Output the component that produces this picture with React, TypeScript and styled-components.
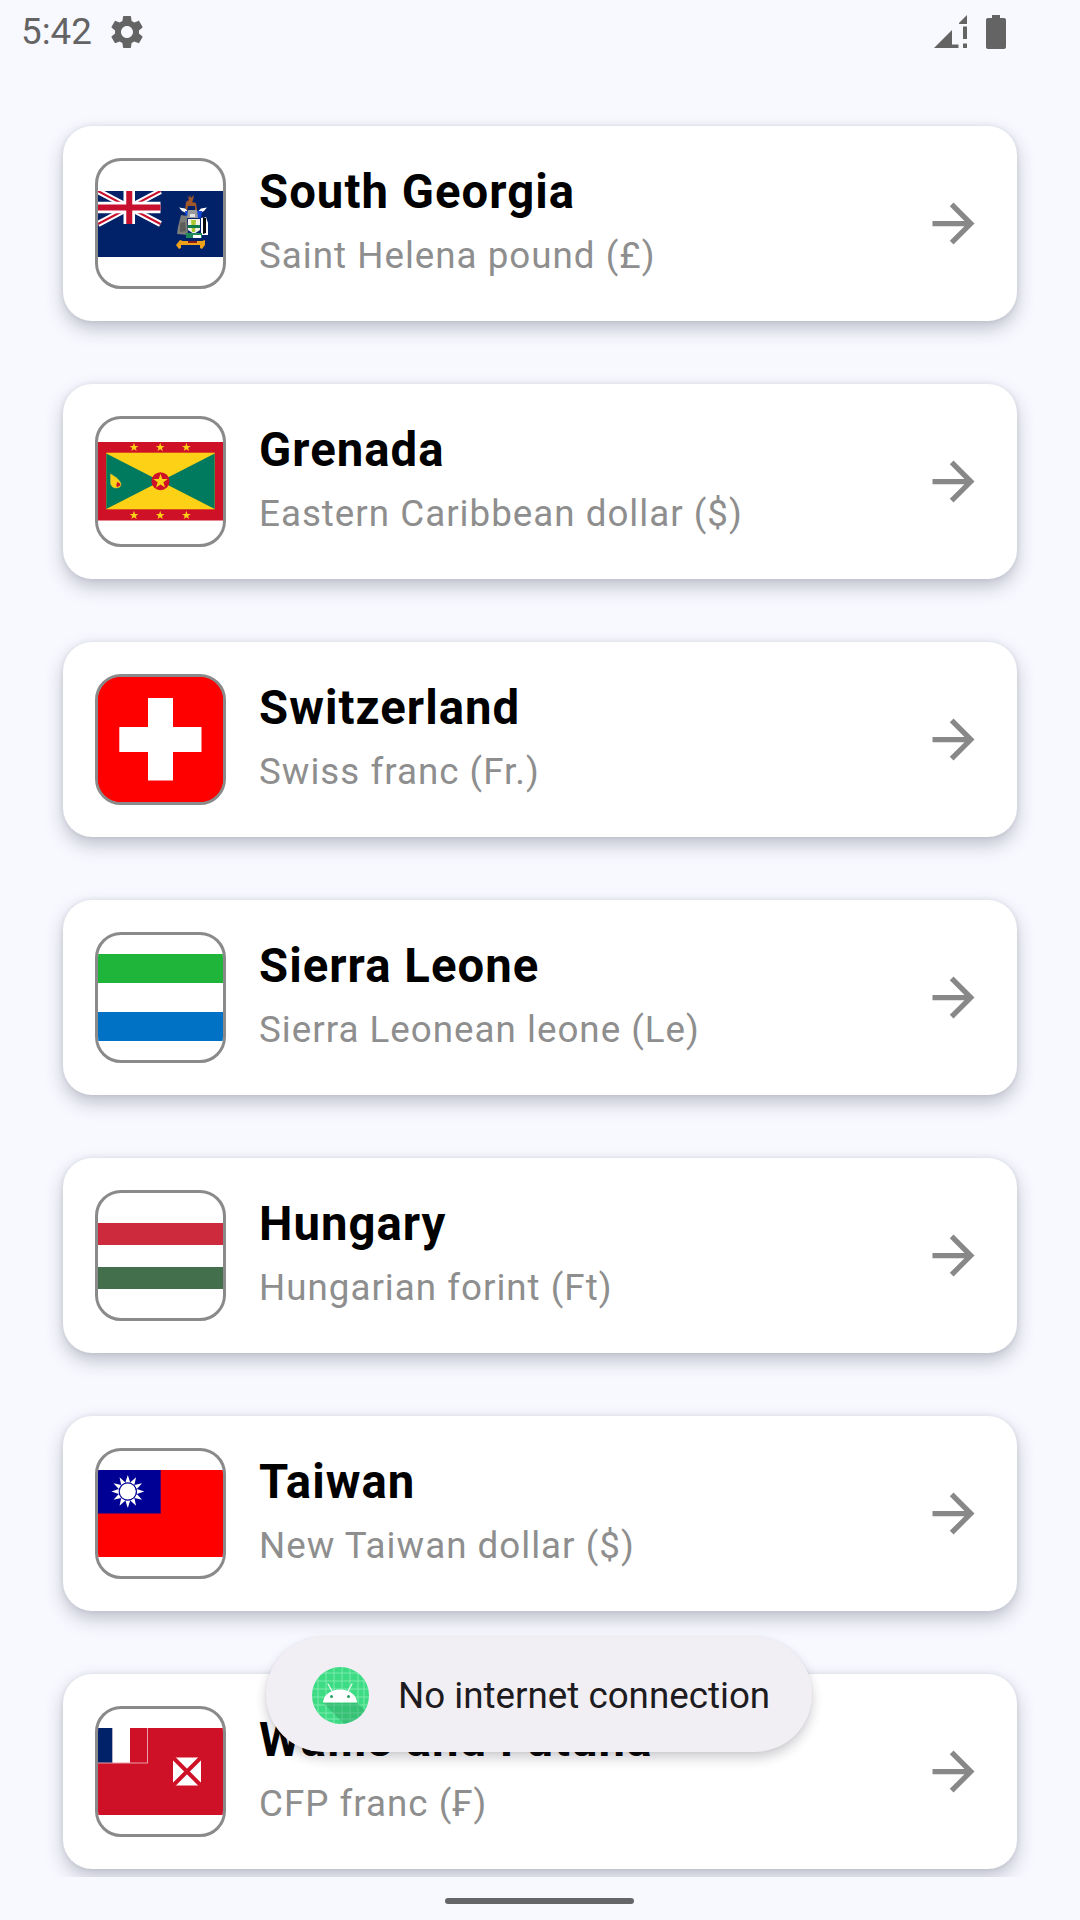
import React from "react";
import styled, { createGlobalStyle } from "styled-components";

const Global = createGlobalStyle`
  html, body { margin: 0; padding: 0; background: #f8f9ff; }
  * { box-sizing: border-box; }
`;

const Screen = styled.div`
  position: relative;
  width: 1080px;
  height: 1920px;
  overflow: hidden;
  background: #f8f9ff;
  font-family: Roboto, "Noto Sans", sans-serif;
`;

const StatusBar = styled.div`
  height: 63px;
  padding: 0 74px 0 21px;
  display: flex;
  align-items: center;
  color: #646464;
`;

const Clock = styled.span`
  font-size: 36.75px;
  line-height: 63px;
  width: 86px;
`;

const StatusGroup = styled.div`
  margin-left: auto;
  display: flex;
  align-items: center;
  gap: 18px;
`;

const Icon = styled.svg`
  display: block;
  flex: none;
  fill: currentColor;
`;

const List = styled.div`
  height: 1814px;
  padding: 63px 63px 0;
  display: flex;
  flex-direction: column;
  gap: 63px;
  overflow: hidden;
`;

const Card = styled.div`
  flex: none;
  height: 195px;
  padding: 0 32px;
  display: flex;
  align-items: center;
  background: #fff;
  border-radius: 29px;
  box-shadow: 0 8px 18px rgba(30, 35, 60, 0.26), 0 0 5px rgba(30, 35, 60, 0.1);
`;

const FlagBox = styled.div<{ $fill?: string }>`
  flex: none;
  width: 131px;
  height: 131px;
  border: 3px solid #8a8a8a;
  border-radius: 26px;
  background: ${(p) => p.$fill ?? "#fff"};
  display: flex;
  align-items: center;
  overflow: hidden;
`;

const FlagArt = styled.svg`
  display: block;
  width: 125px;
  flex: none;
`;

const Texts = styled.div`
  flex: 1;
  margin-left: 33px;
  padding-bottom: 5px;
  display: flex;
  flex-direction: column;
  gap: 14px;
`;

const Title = styled.div`
  font-size: 47.25px;
  font-weight: 700;
  line-height: 55px;
  letter-spacing: 1.05px;
  color: #000;
`;

const Subtitle = styled.div`
  font-size: 36.75px;
  line-height: 43px;
  letter-spacing: 1px;
  color: #8e8e8e;
`;

const Arrow = styled(Icon)`
  color: #888;
`;

const Toast = styled.div`
  position: absolute;
  left: 266px;
  top: 1637px;
  width: 546px;
  height: 115px;
  padding: 1px 0 0 46px;
  display: flex;
  align-items: center;
  gap: 29px;
  background: #f1eff4;
  border-radius: 58px;
  box-shadow: 0 6px 12px rgba(30, 30, 50, 0.22), 0 0 3px rgba(30, 30, 50, 0.06);
  font-size: 36.75px;
  color: #1d1b20;
  white-space: nowrap;
`;

const HomeBar = styled.div`
  position: absolute;
  left: 445px;
  top: 1898px;
  width: 189px;
  height: 6px;
  border-radius: 3px;
  background: #646668;
`;

const star = (cx: number, cy: number, r: number) => {
  const pts: string[] = [];
  for (let i = 0; i < 10; i++) {
    const rad = i % 2 ? r * 0.4 : r;
    const a = -Math.PI / 2 + (i * Math.PI) / 5;
    pts.push(`${(cx + rad * Math.cos(a)).toFixed(2)},${(cy + rad * Math.sin(a)).toFixed(2)}`);
  }
  return pts.join(" ");
};

const SouthGeorgia = () => (
  <FlagArt viewBox="0 0 125 66">
    <rect width="125" height="66" fill="#012169" />
    <path d="M0 0L62.5 33M62.5 0L0 33" stroke="#fff" strokeWidth="6" />
    <path d="M0 0L62.5 33M62.5 0L0 33" stroke="#c8102e" strokeWidth="2" />
    <path d="M31.25 0V33M0 16.5H62.5" stroke="#fff" strokeWidth="11.5" />
    <path d="M31.25 0V33M0 16.5H62.5" stroke="#c8102e" strokeWidth="6" />
    <path d="M89 4l2 3 1-3 1 3 3-3-1 5-1 2 4 1 1 7-2 1 0-5-7 0-1 5-2 0 1-9 3-2z" fill="#a0582a" />
    <path d="M81 16.500l6 1 3 3-2 1.500-4-2zM109 16.500l-6 1-3 3 2 1.500 4-2z" fill="#fff" />
    <path d="M87 20h17l-1 7h-15z" fill="#1446d8" />
    <path d="M90 19h9l1 8h-11z" fill="#9a9a9a" />
    <path d="M92 23h5v3h-5z" fill="#e4e4e4" />
    <path d="M80 36l3-12 6 1 1 19-11-1z" fill="#7c7c78" />
    <path d="M82 32l5-1 1 9-6 1z" fill="#5c5c58" />
    <path d="M90 28h12v11l-6 4-6-4z" fill="#f1f1ea" />
    <path d="M93 29h5l-1 12h-3z" fill="#a9c832" />
    <path d="M90 34h12v3h-12z" fill="#0f7a4a" />
    <path d="M103 27l5-1 2 6 0 12-7 0z" fill="#fff" />
    <path d="M105 26l3 1 0 15-3 1z" fill="#0b0b0b" />
    <path d="M88 42h16v5h-16z" fill="#1f8a58" />
    <path d="M95 44h8v3h-8z" fill="#fff" />
    <path d="M82 49l3 1h19l3-1 0 5-3 4-2-1 0-3h-19l0 3-2 1-3-4z" fill="#eda21a" />
    <path d="M90 50h9v2h-9z" fill="#8c1d18" />
  </FlagArt>
);

const Grenada = () => (
  <FlagArt viewBox="0 0 125 78.5">
    <rect width="125" height="78.5" fill="#ce1126" />
    <rect x="8.3" y="10.7" width="108.4" height="56.6" fill="#fcd116" />
    <path d="M8.3 11.4L62.5 39.2L8.3 67zM116.7 11.4L62.5 39.2L116.7 67z" fill="#007a5e" />
    <circle cx="62.5" cy="39.2" r="9" fill="#ce1126" />
    <polygon points={star(62.5, 39.4, 7.6)} fill="#fcd116" />
    {[36, 62.2, 88.4].map((x) => (
      <React.Fragment key={x}>
        <polygon points={star(x, 5.4, 4.6)} fill="#fcd116" />
        <polygon points={star(x, 73.4, 4.6)} fill="#fcd116" />
      </React.Fragment>
    ))}
    <path d="M12.500 32c5 2.500 10 6.500 10.500 10.500 0 2.500-2.500 3.500-5 3.500-3.500 0-5.500-2.500-5.500-6z" fill="#fcd116" stroke="#d8c040" strokeWidth="0.5" />
    <path d="M19.500 40c2 .8 3 2 3 3.300l-3.500 2c-1-1.800-.8-3.600.5-5.300z" fill="#ce1126" />
  </FlagArt>
);

const Swiss = () => (
  <FlagArt viewBox="0 0 125 125">
    <rect width="125" height="125" fill="#f00" />
    <path d="M50 21h25v29h28.500v25h-28.500v28.500h-25v-28.500h-28.700v-25h28.700z" fill="#fff" />
  </FlagArt>
);

const SierraLeone = () => (
  <FlagArt viewBox="0 0 125 87">
    <rect width="125" height="29" fill="#1eb53a" />
    <rect y="29" width="125" height="29" fill="#fff" />
    <rect y="58" width="125" height="29" fill="#0072c6" />
  </FlagArt>
);

const Hungary = () => (
  <FlagArt viewBox="0 0 125 66">
    <rect width="125" height="22" fill="#cd2a3e" />
    <rect y="22" width="125" height="22" fill="#fff" />
    <rect y="44" width="125" height="22" fill="#436f4d" />
  </FlagArt>
);

const Taiwan = () => {
  const rays = Array.from({ length: 12 }, (_, i) => i * 30);
  return (
    <FlagArt viewBox="0 0 125 87">
      <rect width="125" height="87" fill="#fe0000" />
      <rect width="62.700" height="43.500" fill="#000095" />
      <g transform="translate(29.800 21.500)">
        {rays.map((a) => (
          <polygon key={a} points="-2.400,-9 2.400,-9 0,-16.500" fill="#fff" transform={`rotate(${a})`} />
        ))}
        <circle r="9" fill="#000095" />
        <circle r="8" fill="#fff" />
      </g>
    </FlagArt>
  );
};

const Wallis = () => (
  <FlagArt viewBox="0 0 125 87">
    <rect width="125" height="87" fill="#ce1126" />
    <rect width="50" height="35.500" fill="#e8a0a8" />
    <rect width="14.500" height="34.500" fill="#012169" />
    <rect x="14.500" width="17.500" height="34.500" fill="#fff" />
    <rect x="32" width="17" height="34.500" fill="#ce1126" />
    <rect x="75" y="29.500" width="28" height="28" fill="#fff" />
    <path d="M75 29.500L103 57.500M103 29.500L75 57.500" stroke="#ce1126" strokeWidth="4" />
  </FlagArt>
);

const AndroidBadge = () => {
  const lines = [6, 14, 22, 30, 38, 46, 52];
  return (
    <Icon width="57" height="57" viewBox="0 0 57 57">
      <defs>
        <clipPath id="badge">
          <circle cx="28.500" cy="28.500" r="28.500" />
        </clipPath>
      </defs>
      <g clipPath="url(#badge)">
        <rect width="57" height="57" fill="#3ddc84" />
        {lines.map((v) => (
          <path key={v} d={`M${v} 0V57M0 ${v}H57`} stroke="#8aeeb8" strokeWidth="0.8" />
        ))}
        <path d="M11 35.500H45L57 47V57H32Z" fill="#2a9d62" opacity="0.42" />
      </g>
      <path d="M16 17l4 7M40 17l-4 7" stroke="#fff" strokeWidth="1.100" strokeLinecap="round" fill="none" />
      <path d="M11 35.500C11.500 28 18.500 22.500 28 22.500S44.500 28 45 35.500Z" fill="#fff" />
      <circle cx="19.500" cy="29.500" r="1.500" fill="#2a9d62" />
      <circle cx="36.500" cy="29.500" r="1.500" fill="#2a9d62" />
    </Icon>
  );
};

type Row = { name: string; sub: string; flag: React.ReactNode; fill?: string };

const rows: Row[] = [
  { name: "South Georgia", sub: "Saint Helena pound (£)", flag: <SouthGeorgia /> },
  { name: "Grenada", sub: "Eastern Caribbean dollar ($)", flag: <Grenada /> },
  { name: "Switzerland", sub: "Swiss franc (Fr.)", flag: <Swiss />, fill: "#f00" },
  { name: "Sierra Leone", sub: "Sierra Leonean leone (Le)", flag: <SierraLeone /> },
  { name: "Hungary", sub: "Hungarian forint (Ft)", flag: <Hungary /> },
  { name: "Taiwan", sub: "New Taiwan dollar ($)", flag: <Taiwan /> },
  { name: "Wallis and Futuna", sub: "CFP franc (₣)", flag: <Wallis /> },
];

export default function App() {
  return (
    <Screen>
      <Global />
      <StatusBar>
        <Clock>5:42</Clock>
        <Icon width="40" height="40" viewBox="0 0 24 24">
          <path d="M19.14 12.94c.04-.3.06-.61.06-.94 0-.32-.02-.64-.07-.94l2.03-1.58c.18-.14.23-.41.12-.61l-1.92-3.32c-.12-.22-.37-.29-.59-.22l-2.39.96c-.5-.38-1.03-.7-1.62-.94l-.36-2.54c-.04-.24-.24-.41-.48-.41h-3.84c-.24 0-.43.17-.47.41l-.36 2.54c-.59.24-1.13.57-1.62.94l-2.39-.96c-.22-.08-.47 0-.59.22L2.74 8.87c-.12.21-.08.47.12.61l2.03 1.58c-.05.3-.09.63-.09.94s.02.64.07.94l-2.03 1.58c-.18.14-.23.41-.12.61l1.92 3.32c.12.22.37.29.59.22l2.39-.96c.5.38 1.03.7 1.62.94l.36 2.54c.05.24.24.41.48.41h3.84c.24 0 .44-.17.47-.41l.36-2.54c.59-.24 1.13-.56 1.62-.94l2.39.96c.22.08.47 0 .59-.22l1.92-3.32c.12-.22.07-.47-.12-.61l-2.01-1.58zM12 15.6c-1.98 0-3.6-1.62-3.6-3.6s1.62-3.6 3.6-3.6 3.6 1.62 3.6 3.6-1.62 3.6-3.6 3.6z" />
        </Icon>
        <StatusGroup>
          <Icon width="34" height="34" viewBox="0 0 34 34">
            <path d="M0 33L18 15V29.500H24.500V33Z" />
            <path d="M25 8L33 0V9H25Z" />
            <path d="M29 11.500H33V24H29ZM29 28.500H33V33H29Z" />
          </Icon>
          <Icon width="20" height="34" viewBox="0 0 20 34">
            <path d="M6 0H14V3H18C19.100 3 20 3.900 20 5V32C20 33.100 19.100 34 18 34H2C.9 34 0 33.100 0 32V5C0 3.900.9 3 2 3H6Z" />
          </Icon>
        </StatusGroup>
      </StatusBar>
      <List>
        {rows.map((r) => (
          <Card key={r.name}>
            <FlagBox $fill={r.fill}>{r.flag}</FlagBox>
            <Texts>
              <Title>{r.name}</Title>
              <Subtitle>{r.sub}</Subtitle>
            </Texts>
            <Arrow width="63" height="63" viewBox="0 0 24 24">
              <path d="M12 4l-1.410 1.410L16.170 11H4v2h12.170l-5.580 5.590L12 20l8-8z" />
            </Arrow>
          </Card>
        ))}
      </List>
      <Toast>
        <AndroidBadge />
        <span>No internet connection</span>
      </Toast>
      <HomeBar />
    </Screen>
  );
}
